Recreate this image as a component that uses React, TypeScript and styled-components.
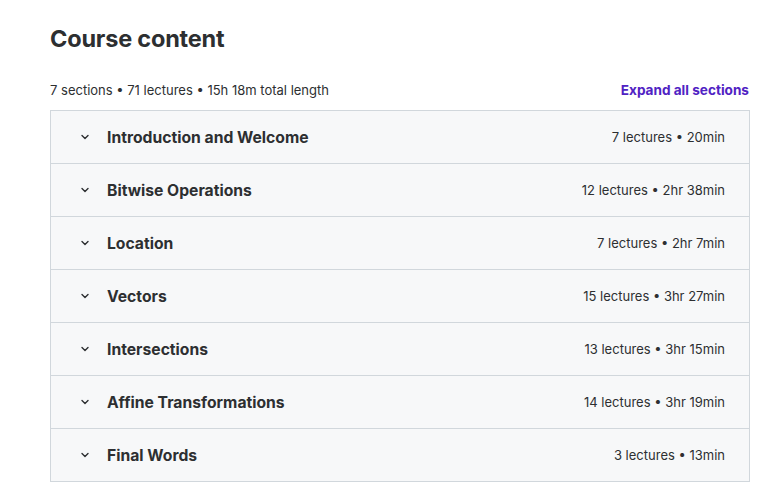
import styled, { createGlobalStyle } from "styled-components";

const GlobalStyle = createGlobalStyle`
  body {
    margin: 0;
    background: #ffffff;
    font-family: "Inter", "Liberation Sans", sans-serif;
    color: #2d2f31;
  }
`;

const Page = styled.div`
  width: 700px;
  padding: 23px 0 0 50px;
`;

const Title = styled.h2`
  margin: 0;
  font-size: 23.5px;
  font-weight: 700;
  line-height: 32px;
  letter-spacing: -0.2px;
`;

const Summary = styled.div`
  display: flex;
  justify-content: space-between;
  align-items: center;
  margin-top: 25px;
  height: 20px;
  font-size: 13px;
  padding-right: 1px;
`;

const ExpandButton = styled.button`
  border: none;
  background: none;
  padding: 0;
  color: #5022c3;
  font-family: inherit;
  font-size: 13.6px;
  font-weight: 700;
  cursor: pointer;
`;

const Panel = styled.div`
  margin-top: 10px;
  border: 1px solid #d1d7dc;
  border-bottom: none;
`;

const Row = styled.div`
  display: flex;
  align-items: center;
  height: 52px;
  padding: 0 24px 0 28px;
  background: #f7f8f9;
  border-bottom: 1px solid #d1d7dc;
`;

const Chevron = styled.span`
  display: flex;
  width: 12px;
  margin-right: 16px;
  color: #2d2f31;
`;

const SectionTitle = styled.span`
  flex: 1;
  font-size: 15.7px;
  font-weight: 700;
`;

const SectionMeta = styled.span`
  font-size: 13px;
`;

const sections = [
  ["Introduction and Welcome", "7 lectures • 20min"],
  ["Bitwise Operations", "12 lectures • 2hr 38min"],
  ["Location", "7 lectures • 2hr 7min"],
  ["Vectors", "15 lectures • 3hr 27min"],
  ["Intersections", "13 lectures • 3hr 15min"],
  ["Affine Transformations", "14 lectures • 3hr 19min"],
  ["Final Words", "3 lectures • 13min"],
];

export default function App() {
  return (
    <>
      <GlobalStyle />
      <Page>
        <Title>Course content</Title>
        <Summary>
          <span>7 sections • 71 lectures • 15h 18m total length</span>
          <ExpandButton>Expand all sections</ExpandButton>
        </Summary>
        <Panel>
          {sections.map(([name, meta]) => (
            <Row key={name}>
              <Chevron>
                <svg width="12" height="12" viewBox="0 0 12 12" fill="none">
                  <path d="M3 4.5L6 7.5L9 4.5" stroke="currentColor" strokeWidth="1.4" strokeLinecap="round" strokeLinejoin="round" />
                </svg>
              </Chevron>
              <SectionTitle>{name}</SectionTitle>
              <SectionMeta>{meta}</SectionMeta>
            </Row>
          ))}
        </Panel>
      </Page>
    </>
  );
}
